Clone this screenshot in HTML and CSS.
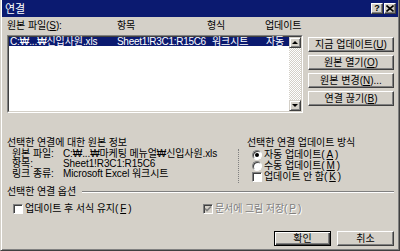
FILE: index.html
```html
<!DOCTYPE html>
<html lang="ko">
<head>
  <meta charset="UTF-8">
  <title>연결</title>
  <link rel="stylesheet" href="styles.css">
</head>
<body>
  <div class="dialog">
    <div class="titlebar">
      <span class="title">연결</span>
      <div class="caption-btns">
        <span class="cbtn help">?</span>
        <span class="cbtn close">
          <svg width="8" height="7" viewBox="0 0 8 7"><path d="M0.5 0.5 L7.5 6.5 M7.5 0.5 L0.5 6.5" stroke="#000" stroke-width="1.6"/></svg>
        </span>
      </div>
    </div>

    <div class="body">
      <div class="list-head">
        <span class="col-file">원본 파일(<u>S</u>):</span>
        <span class="col-item">항목</span>
        <span class="col-type">형식</span>
        <span class="col-upd">업데이트</span>
      </div>

      <div class="list-row">
        <div class="listbox">
          <div class="list-frame">
            <div class="items">
              <div class="item selected">
                <span class="c-file">C:₩...₩신입사원.xls</span>
                <span class="c-item">Sheet1!R3C1:R15C6</span>
                <span class="c-type">워크시트</span>
                <span class="c-upd">자동</span>
              </div>
            </div>
            <div class="vscroll">
              <span class="sb-btn"><i class="tri up"></i></span>
              <span class="sb-track"></span>
              <span class="sb-btn"><i class="tri down"></i></span>
            </div>
          </div>
        </div>
        <div class="side-btns">
          <button class="btn">지금 업데이트(<u>U</u>)</button>
          <button class="btn">원본 열기(<u>O</u>)</button>
          <button class="btn">원본 변경(<u>N</u>)...</button>
          <button class="btn">연결 끊기(<u>B</u>)</button>
        </div>
      </div>

      <div class="info-row">
        <div class="source-info">
          <div class="group-title">선택한 연결에 대한 원본 정보</div>
          <div class="info-grid">
            <span>원본 파일:</span><span>C:₩...₩마케팅 메뉴얼₩신입사원.xls</span>
            <span>항목:</span><span>Sheet1!R3C1:R15C6</span>
            <span>링크 종류:</span><span>Microsoft Excel 워크시트</span>
          </div>
        </div>
        <div class="update-method">
          <div class="group-title">선택한 연결 업데이트 방식</div>
          <div class="choices">
            <label class="choice"><i class="radio checked"></i>자동 업데이트(<u>A</u>)</label>
            <label class="choice"><i class="radio"></i>수동 업데이트(<u>M</u>)</label>
            <label class="choice"><i class="check"></i>업데이트 안 함(<u>K</u>)</label>
          </div>
        </div>
      </div>

      <div class="options-head">
        <span>선택한 연결 옵션</span>
        <span class="rule"></span>
      </div>

      <div class="options">
        <label class="choice opt-keep"><i class="check"></i>업데이트 후 서식 유지(<u>F</u>)</label>
        <label class="choice disabled"><i class="check checked-dis">
          <svg width="8" height="8" viewBox="0 0 8 8"><path d="M1 3.5 L3 5.5 L7 1.5" fill="none" stroke="#808080" stroke-width="1.6"/></svg>
        </i>문서에 그림 저장(<u>P</u>)</label>
      </div>

      <div class="footer">
        <button class="btn default">확인</button>
        <button class="btn">취소</button>
      </div>
    </div>
  </div>
</body>
</html>
```

FILE: styles.css
```css
* {
  box-sizing: border-box;
}

body {
  margin: 0;
  background: #d4d0c8;
  font: 10px/12px "Liberation Sans", "Noto Sans CJK KR", sans-serif;
  letter-spacing: -0.1px;
  color: #000;
}

u {
  text-decoration: underline;
}

.dialog {
  width: 400px;
  height: 251px;
  background: #d4d0c8;
  border-left: 1px solid #d4d0c8;
  border-right: 1px solid #404040;
  border-bottom: 1px solid #404040;
  box-shadow: inset 1px 0 #fff, inset -1px -1px #808080;
  display: flex;
  flex-direction: column;
}

/* title bar */
.titlebar {
  height: 17px;
  margin: 0 1px;
  padding: 0 2px 0 3px;
  background: #0b1a70;
  display: flex;
  align-items: center;
  justify-content: space-between;
}

.title {
  color: #fff;
  font-size: 11px;
  letter-spacing: 0;
}

.caption-btns {
  display: flex;
  gap: 1px;
}

.cbtn {
  width: 12px;
  height: 11px;
  background: #d4d0c8;
  border: 1px solid;
  border-color: #fff #404040 #404040 #fff;
  box-shadow: inset -1px -1px #808080;
  display: flex;
  align-items: center;
  justify-content: center;
  font: bold 9px/9px "Liberation Sans", sans-serif;
}

/* body */
.body {
  flex: 1;
  padding: 3px 5px 0 6px;
  display: flex;
  flex-direction: column;
}

.list-head {
  display: flex;
  height: 12px;
}

.col-file { width: 110px; }
.col-item { width: 90px; }
.col-type { width: 58px; }

.list-row {
  display: flex;
  gap: 5px;
  margin-top: 3px;
}

.listbox {
  width: 296px;
  height: 78px;
  border: 1px solid;
  border-color: #808080 #fff #fff #808080;
}

.list-frame {
  height: 100%;
  border: 1px solid;
  border-color: #404040 #d4d0c8 #d4d0c8 #404040;
  background: #fff;
  display: flex;
}

.items {
  flex: 1;
}

.item {
  display: flex;
  height: 9px;
  line-height: 9px;
  padding-left: 1px;
  white-space: nowrap;
}

.item.selected {
  background: #0b1a70;
  color: #fff;
}

.c-file { width: 107px; }
.c-item { width: 95px; letter-spacing: -0.3px; }
.c-type { width: 54px; }

.vscroll {
  width: 12px;
  display: flex;
  flex-direction: column;
}

.sb-btn {
  height: 11px;
  background: #d4d0c8;
  border: 1px solid;
  border-color: #d4d0c8 #404040 #404040 #d4d0c8;
  box-shadow: inset 1px 1px #fff, inset -1px -1px #808080;
  display: flex;
  align-items: center;
  justify-content: center;
}

.sb-track {
  flex: 1;
  background: repeating-conic-gradient(#fff 0 25%, #d4d0c8 0 50%) 0 0 / 2px 2px;
}

.tri {
  width: 0;
  height: 0;
  border-left: 3px solid transparent;
  border-right: 3px solid transparent;
}

.tri.up {
  border-bottom: 3px solid #000;
}

.tri.down {
  border-top: 3px solid #000;
}

.side-btns {
  width: 86px;
  display: flex;
  flex-direction: column;
  gap: 3px;
  padding-top: 2px;
}

.btn {
  height: 15px;
  padding: 0;
  background: #d4d0c8;
  border: 1px solid;
  border-color: #fff #404040 #404040 #fff;
  box-shadow: inset -1px -1px #808080;
  font: inherit;
  line-height: 12px;
  color: #000;
  text-align: center;
}

.btn.default {
  border: 1px solid #000;
  box-shadow: inset 1px 1px #fff, inset -1px -1px #404040, inset -2px -2px #808080;
}

/* source info and update method */
.info-row {
  display: flex;
  margin-top: 24px;
}

.source-info {
  width: 231px;
}

.group-title {
  height: 12px;
}

.info-grid {
  display: grid;
  grid-template-columns: 51px 1fr;
  padding-left: 5px;
  line-height: 10px;
  white-space: nowrap;
}

.update-method {
  flex: 1;
}

.update-method .group-title {
  padding-left: 9px;
}

.choices {
  border-left: 1px dotted #808080;
  padding: 0 0 1px 13px;
}

.choice {
  display: flex;
  align-items: center;
  gap: 2px;
  height: 11px;
  white-space: nowrap;
}

.radio {
  width: 10px;
  height: 10px;
  border-radius: 50%;
  background: #fff;
  border: 1px solid;
  border-color: #808080 #fff #fff #808080;
  box-shadow: inset 1px 1px #404040;
  display: flex;
  align-items: center;
  justify-content: center;
}

.radio.checked::after {
  content: "";
  width: 4px;
  height: 4px;
  border-radius: 50%;
  background: #000;
}

.check {
  width: 10px;
  height: 10px;
  background: #fff;
  border: 1px solid;
  border-color: #808080 #fff #fff #808080;
  box-shadow: inset 1px 1px #404040;
  display: flex;
  align-items: center;
  justify-content: center;
}

.check.checked-dis {
  background: #d4d0c8;
}

.options-head {
  display: flex;
  align-items: center;
  height: 12px;
  margin-top: 3px;
}

.rule {
  flex: 1;
  margin-left: 6px;
  border-top: 1px solid #808080;
  border-bottom: 1px solid #fff;
}

.options {
  display: flex;
  margin-top: 5px;
}

.opt-keep {
  width: 196px;
  padding-left: 6px;
}

.disabled {
  color: #808080;
  text-shadow: 1px 1px #fff;
}

.footer {
  display: flex;
  justify-content: flex-end;
  gap: 6px;
  margin-top: 17px;
}

.footer .btn {
  width: 57px;
}
```
